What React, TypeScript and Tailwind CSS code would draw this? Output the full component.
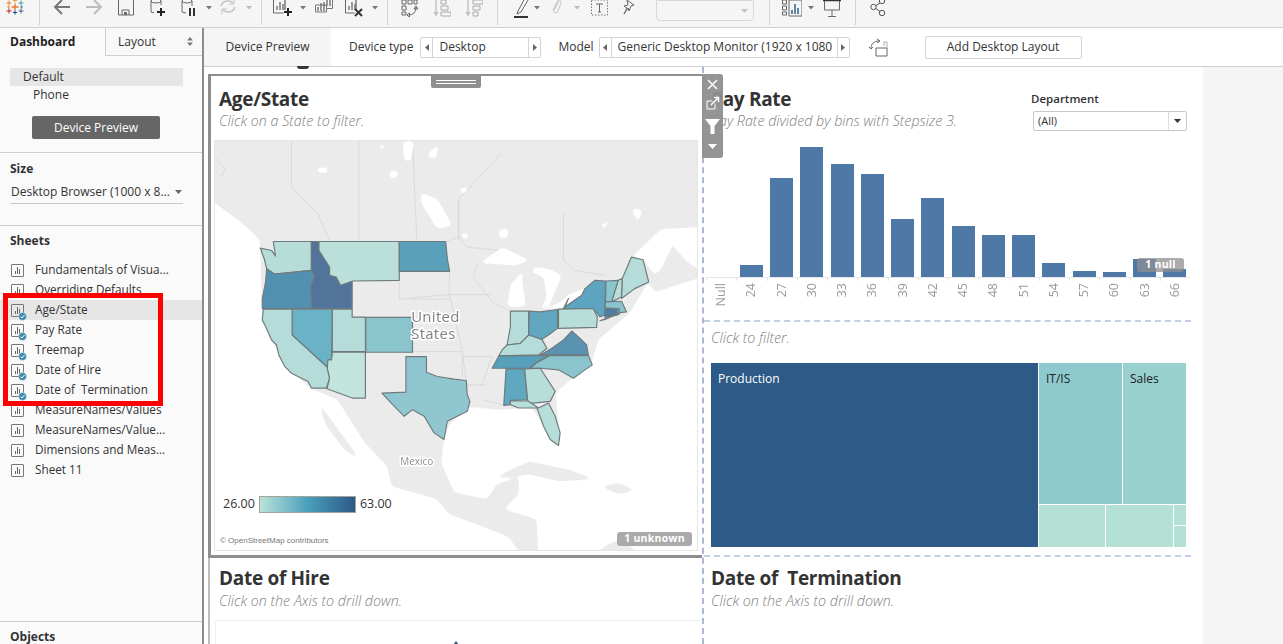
const sheets = [
  { name: "Fundamentals of Visua...", used: false },
  { name: "Overriding Defaults", used: false },
  { name: "Age/State", used: true, active: true },
  { name: "Pay Rate", used: true },
  { name: "Treemap", used: true },
  { name: "Date of Hire", used: true },
  { name: "Date of  Termination", used: true },
  { name: "MeasureNames/Values", used: false },
  { name: "MeasureNames/Value...", used: false },
  { name: "Dimensions and Meas...", used: false },
  { name: "Sheet 11", used: false },
];

const payBins = [
  { label: "Null", h: 0 },
  { label: "24", h: 12 },
  { label: "27", h: 99 },
  { label: "30", h: 130 },
  { label: "33", h: 113 },
  { label: "36", h: 103 },
  { label: "39", h: 58 },
  { label: "42", h: 79 },
  { label: "45", h: 51 },
  { label: "48", h: 42 },
  { label: "51", h: 42 },
  { label: "54", h: 14 },
  { label: "57", h: 6 },
  { label: "60", h: 5 },
  { label: "63", h: 18 },
  { label: "66", h: 8 },
];

// coordinates are 3x crops of the map, hence the two scaled groups below
const westStates = [
  ["#b7ddd9", "M205,318 L320,318 L320,405 L255,412 L208,416 L185,400 L178,370 L166,338 L200,345 L212,362 Z"],
  ["#5290b0", "M185,400 L208,416 L255,412 L320,405 L331,422 L318,455 L322,520 L172,520 L172,490 L182,440 Z"],
  ["#52749a", "M320,318 L343,318 L343,345 L375,395 L375,420 L395,425 L408,450 L443,437 L443,520 L322,520 L318,455 L331,422 L320,405 Z"],
  ["#bbe0da", "M343,318 L585,318 L585,435 L445,437 L408,450 L395,425 L375,420 L375,395 L343,345 Z"],
  ["#5ba0ba", "M585,318 L725,318 L730,370 L737,408 L585,408 Z"],
  ["#b5dcd8", "M383,522 L443,522 L443,546 L483,546 L483,650 L383,650 Z"],
  ["#8ac4cd", "M484,547 L625,547 L625,652 L484,652 Z"],
  ["#6ab2c6", "M262,522 L383,522 L381,675 L370,675 L368,697 L262,600 Z"],
  ["#b5dcd8", "M175,522 L262,522 L262,600 L368,697 L368,700 L375,730 L365,760 L320,760 L310,740 L260,715 L240,695 L222,660 L215,630 L200,615 L180,570 L172,555 Z"],
  ["#c3e4dd", "M383,652 L483,652 L483,790 L443,790 L367,762 L375,730 L368,700 L370,675 L381,675 Z"],
  ["#8fc6d0", "M605,665 L667,665 L667,712 L700,725 L750,733 L787,737 L790,780 L798,800 L790,830 L730,860 L720,915 L690,895 L660,845 L625,825 L600,845 L565,810 L533,775 L605,772 Z"],
];

const eastStates = [
  ["#b5dcd8", "M185,333 L240,333 L240,405 L215,430 L175,435 L185,380 Z"],
  ["#62a7c0", "M242,333 L275,335 L327,328 L327,385 L300,405 L280,418 L240,405 Z"],
  ["#b5dcd8", "M175,435 L215,430 L240,405 L280,418 L295,445 L270,465 L150,468 L160,450 Z"],
  ["#b7ded8", "M330,327 L435,325 L447,350 L445,382 L330,385 Z"],
  ["#5ca4bf", "M350,320 L400,285 L410,265 L440,240 L472,242 L470,345 L455,350 L435,325 L345,325 L360,295 Z"],
  ["#5a93b2", "M275,465 L310,445 L345,420 L370,393 L395,415 L415,435 L420,465 Z"],
  ["#56a0bc", "M150,468 L300,467 L260,490 L245,505 L130,505 Z"],
  ["#8ac4cd", "M305,467 L420,467 L432,495 L410,510 L375,535 L330,510 L275,505 L245,505 L262,490 Z"],
  ["#60a8bf", "M172,507 L228,507 L236,600 L185,602 L185,615 L165,617 Z"],
  ["#b7ded8", "M228,507 L275,505 L320,575 L305,605 L238,612 Z"],
  ["#b7ded8", "M185,603 L238,604 L270,625 L300,610 L320,650 L335,700 L330,738 L305,720 L285,680 L265,625 L210,625 L185,615 Z"],
  ["#b5dcd8", "M522,235 L550,170 L585,178 L602,245 L560,265 L520,295 Z"],
  ["#b7ded8", "M510,240 L522,235 L520,290 L490,305 Z"],
  ["#8ac4cd", "M473,242 L510,240 L490,305 L472,305 Z"],
  ["#8ac4cd", "M472,305 L520,303 L535,335 L510,338 L505,325 L470,323 Z"],
  ["#4f7c9f", "M470,325 L503,325 L505,345 L470,352 Z"],
  ["#5a93b2", "M505,325 L513,325 L513,342 L505,345 Z"],
  ["#5ca4bf", "M455,362 L500,345 L470,358 Z"],
];

const Ico = ({ w, className, children }: { w: number; className: string; children: React.ReactNode }) => (
  <svg width={w} height={24} viewBox={`0 0 ${w} 24`} fill="none" className={`shrink-0 ${className}`}>
    {children}
  </svg>
);

const Caret = ({ className, light }: { className: string; light?: boolean }) => (
  <Ico w={6} className={className}>
    <path d="M0 9h6l-3 3.500z" fill={light ? "#bbb" : "#777"} />
  </Ico>
);

const Sep = ({ className }: { className: string }) => <div className={`w-px h-[28px] shrink-0 bg-[#d4d4d4] ${className}`} />;

const Plus = ({ x, y, c = "#222" }: { x: number; y: number; c?: string }) => (
  <path d={`M${x - 4} ${y}h8M${x} ${y - 4}v8`} stroke={c} strokeWidth="2" />
);

const MiniBars = ({ x, y }: { x: number; y: number }) => (
  <path d={`M${x} ${y}v-4M${x + 3} ${y}v-8M${x + 6} ${y}v-6`} stroke="#666" strokeWidth="1.3" />
);

const LogoCross = ({ x, y, r, c, t = 1 }: { x: number; y: number; r: number; c: string; t?: number }) => (
  <path d={`M${x - r} ${y}h${r * 2}M${x} ${y - r}v${r * 2}`} stroke={c} strokeWidth={t} />
);

const Toolbar = () => (
  <div className="h-[28px] shrink-0 bg-[#f5f5f5] border-b border-[#cfcfcf] overflow-hidden">
    <div className="flex items-start -mt-[3px]">
      <Ico w={18} className="ml-[6px]">
        <LogoCross x={9} y={10} r={3.5} c="#e8762d" t={1.4} />
        <LogoCross x={9} y={3.5} r={2} c="#eb9e3e" />
        <LogoCross x={3} y={6} r={2.5} c="#e8862d" />
        <LogoCross x={15} y={6} r={2.5} c="#5b9aa8" />
        <LogoCross x={2.5} y={10} r={1.5} c="#eb9e3e" />
        <LogoCross x={15.5} y={10} r={1.5} c="#5b87a8" />
        <LogoCross x={3} y={14} r={2.5} c="#c72037" />
        <LogoCross x={9} y={15.5} r={2} c="#1f457e" />
        <LogoCross x={15} y={14} r={2.5} c="#3f6799" />
      </Ico>
      <Sep className="ml-[15px]" />
      <Ico w={18} className="ml-[13px]">
        <path d="M17 10H2M9 3l-7 7 7 7" stroke="#777" strokeWidth="2" />
      </Ico>
      <Ico w={18} className="ml-[14px]">
        <path d="M1 10h15M9 3l7 7-7 7" stroke="#bdbdbd" strokeWidth="2" />
      </Ico>
      <Ico w={16} className="ml-[15px]">
        <path d="M.5 1h15v17H.5zM4 18v-5h7v5" stroke="#666" />
        <path d="M6 15h3v3H6z" fill="#666" />
      </Ico>
      <Ico w={16} className="ml-[16px]">
        <ellipse cx="6" cy="4" rx="5" ry="2" stroke="#666" />
        <path d="M1 4v11l3 1M11 4v4" stroke="#666" />
        <Plus x={11} y={15} />
      </Ico>
      <Ico w={16} className="ml-[15px]">
        <ellipse cx="6" cy="4" rx="5" ry="2" stroke="#666" />
        <path d="M1 4v11l4 1M11 4v5" stroke="#666" />
        <path d="M9 11v8M13 11v8" stroke="#333" strokeWidth="2" />
      </Ico>
      <Caret className="ml-[9px]" />
      <Ico w={18} className="ml-[7px]">
        <path d="M2 9a7 6 0 0 1 12-3M16 10a7 6 0 0 1-12 3" stroke="#c4c4c4" strokeWidth="1.5" />
        <path d="M15 2v5h-5M3 17v-5h5" stroke="#c4c4c4" />
      </Ico>
      <Caret className="ml-[9px]" light />
      <Sep className="ml-[9px]" />
      <Ico w={20} className="ml-[11px]">
        <path d="M.5 3v13h10" stroke="#666" />
        <MiniBars x={4} y={13} />
        <path d="M12 13V3" stroke="#666" strokeWidth="1.3" />
        <Plus x={15} y={15} />
      </Ico>
      <Caret className="ml-[7px]" />
      <Ico w={18} className="ml-[9px]">
        <path d="M.5 8h11v7H.5z" stroke="#777" />
        <path d="M5.500 2.500h12v9h-6" stroke="#777" />
        <MiniBars x={9} y={9} />
        <MiniBars x={3} y={14} />
      </Ico>
      <Ico w={19} className="ml-[12px]">
        <path d="M.5 3v13h9" stroke="#666" />
        <MiniBars x={4} y={13} />
        <path d="M11 12V3" stroke="#666" strokeWidth="1.300" />
        <path d="M10 12l7 7M17 12l-7 7" stroke="#333" strokeWidth="2" />
      </Ico>
      <Caret className="ml-[8px]" />
      <Sep className="ml-[9px]" />
      <Ico w={17} className="ml-[13px]">
        <path d="M1 3h4v4H1zM7 3h4v4H7zM13 3h3v4h-3zM1 9h4v4H1zM1 15h4v3H1z" stroke="#666" />
        <path d="M15 10c0 5-3 8-7 8M6 18l2.500-2v4zM15 9l-2 3h4z" stroke="#666" />
      </Ico>
      <Ico w={18} className="ml-[15px]">
        <path d="M3 3v15M1 15l2 3 2-3" stroke="#bbb" strokeWidth="1.300" />
        <path d="M8 3h5v4H8zM8 9h7v4H8zM8 15h10v4H8z" stroke="#aaa" />
      </Ico>
      <Ico w={18} className="ml-[14px]">
        <path d="M3 3v15M1 15l2 3 2-3" stroke="#bbb" strokeWidth="1.300" />
        <path d="M8 3h10v4H8zM8 9h7v4H8zM8 15h5v4H8z" stroke="#aaa" />
      </Ico>
      <Sep className="ml-[14px]" />
      <Ico w={16} className="ml-[15px]">
        <path d="M5 14L12 1l3 2-7 12-4 2z" stroke="#666" />
        <path d="M1 20h14" stroke="#333" strokeWidth="2" />
      </Ico>
      <Caret className="ml-[5px]" />
      <Ico w={12} className="ml-[10px]">
        <path d="M9 4L4 13c-1.500 3 3 4 4 1l3-8c1-3-3-4-4-1L3 13" stroke="#c4c4c4" />
      </Ico>
      <Caret className="ml-[12px]" light />
      <Ico w={17} className="ml-[11px]">
        <path d="M.5 3h16v15H.5z" stroke="#777" strokeDasharray="1.500 1.500" />
        <path d="M5 7h7M8.500 7v8M7 15h3" stroke="#666" />
      </Ico>
      <Ico w={14} className="ml-[14px]">
        <path d="M5 3l7 5-3 1-2 5-1-3-4 6 3-6-3-2 4-1z" stroke="#666" />
      </Ico>
      <div className="ml-[20px] mt-[3px] w-[98px] h-[21px] shrink-0 border border-[#d8d8d8] rounded-b-sm flex items-center justify-end pr-[5px]">
        <svg width="7" height="4"><path d="M0 0h7L3.500 4z" fill="#c4c4c4" /></svg>
      </div>
      <Sep className="ml-[15px]" />
      <Ico w={20} className="ml-[12px]">
        <path d="M.5 3h4v4h-4zM.5 9h4v4h-4zM.5 15h4v3h-4zM7 3h13v16H7z" stroke="#666" />
        <path d="M10 17v-4M13 17V7M16 17v-6" stroke="#2e5f8a" strokeWidth="1.500" />
      </Ico>
      <Caret className="ml-[6px]" />
      <Ico w={18} className="ml-[9px]">
        <path d="M0 3h18" stroke="#333" strokeWidth="2.500" />
        <path d="M1.500 4v9h15V4M9 13v6M5 19.500h8" stroke="#666" />
      </Ico>
      <Sep className="ml-[14px]" />
      <Ico w={16} className="ml-[14px]">
        <circle cx="12" cy="4" r="2.700" stroke="#555" />
        <circle cx="3.500" cy="10" r="2.700" stroke="#555" />
        <circle cx="12" cy="16" r="2.700" stroke="#555" />
        <path d="M6 8.500L10 6M6 11.500l4 3" stroke="#555" />
      </Ico>
    </div>
  </div>
);

const SheetIcon = ({ used }: { used: boolean }) => (
  <span className="relative w-[13px] h-[13px] shrink-0 border border-[#777] rounded-[1px] flex items-end justify-center gap-px pb-[2px]">
    <span className="w-px h-[3px] bg-[#666]" />
    <span className="w-px h-[7px] bg-[#666]" />
    <span className="w-px h-[5px] bg-[#666]" />
    {used && (
      <svg width="9" height="9" viewBox="0 0 9 9" className="absolute -right-[4px] -bottom-[5px]">
        <circle cx="4.500" cy="4.500" r="4" fill="#3f87ab" stroke="#fff" strokeWidth=".5" />
        <path d="M2.500 4.500l1.500 1.500 2.500-3" stroke="#fff" fill="none" />
      </svg>
    )}
  </span>
);

const Sidebar = () => (
  <aside className="w-[204px] shrink-0 border-r-2 border-[#8c8c8c] bg-[#fafafa] flex flex-col text-[12px] text-[#333] *:shrink-0">
    <div className="flex h-[28px]">
      <div className="w-[105px] pl-[10px] flex items-center font-bold text-[#222]">Dashboard</div>
      <div className="flex-1 pl-[12px] pr-[9px] flex items-center justify-between border-l border-b border-[#cfcfcf] bg-[#f8f8f8]">
        Layout
        <svg width="6" height="9"><path d="M0 3.500L3 0l3 3.500zM0 5.500L3 9l3-3.500z" fill="#777" /></svg>
      </div>
    </div>
    <div className="ml-[10px] mt-[12px] w-[173px] h-[18px] pl-[13px] flex items-center bg-[#e6e6e6]">Default</div>
    <div className="h-[18px] pl-[33px] flex items-center">Phone</div>
    <div className="ml-[32px] mt-[12px] w-[128px] h-[23px] flex items-center justify-center rounded-[2px] bg-[#666] text-white">Device Preview</div>
    <div className="mt-[13px] border-t border-[#cfcfcf]" />
    <div className="mt-[7px] h-[18px] pl-[10px] flex items-center font-bold">Size</div>
    <div className="ml-[10px] mt-[5px] w-[173px] h-[21px] pb-[3px] flex items-center justify-between border-b border-[#c8c8c8] whitespace-nowrap">
      <span className="pl-px">Desktop Browser (1000 x 8...</span>
      <svg width="7" height="4" className="mr-[1px]"><path d="M0 0h7L3.500 4z" fill="#666" /></svg>
    </div>
    <div className="mt-[21px] border-t border-[#cfcfcf]" />
    <div className="mt-[6px] h-[18px] pl-[10px] flex items-center font-bold">Sheets</div>
    <div className="mt-[10px] flex flex-col text-[11.750px]">
      {sheets.map((sheet) => (
        <div key={sheet.name} className={`h-[20px] pl-[11px] flex items-center gap-[11px] whitespace-pre ${sheet.active ? "bg-[#e6e6e6]" : ""}`}>
          <SheetIcon used={sheet.used} />
          {sheet.name}
        </div>
      ))}
    </div>
    <div className="mt-[141px] border-t border-[#cfcfcf]" />
    <div className="mt-[7px] h-[16px] pl-[10px] flex items-center font-bold">Objects</div>
  </aside>
);

const Stepper = ({ label, className }: { label: string; className: string }) => (
  <div className={`h-[21px] shrink-0 flex items-stretch border border-[#d4d4d4] rounded-[2px] bg-white ${className}`}>
    <span className="w-[12px] flex items-center justify-center border-r border-[#d4d4d4]">
      <svg width="4" height="7"><path d="M4 0v7L0 3.500z" fill="#666" /></svg>
    </span>
    <span className="flex-1 pl-[6px] flex items-center whitespace-nowrap overflow-hidden">{label}</span>
    <span className="w-[12px] flex items-center justify-center border-l border-[#d4d4d4]">
      <svg width="4" height="7"><path d="M0 0v7l4-3.500z" fill="#666" /></svg>
    </span>
  </div>
);

const PreviewBar = () => (
  <div className="h-[39px] shrink-0 flex items-center border-b border-[#cfcfcf] bg-white text-[12px] text-[#333]">
    <div className="w-[127px] h-full flex items-center justify-center bg-[#f5f5f5]">Device Preview</div>
    <span className="ml-[18px]">Device type</span>
    <Stepper label="Desktop" className="ml-[7px] w-[121px]" />
    <span className="ml-[17px]">Model</span>
    <Stepper label="Generic Desktop Monitor (1920 x 1080" className="ml-[5px] w-[251px]" />
    <svg width="20" height="20" viewBox="0 0 20 20" fill="none" className="ml-[19px]">
      <path d="M7 11h11v8H7z" stroke="#666" />
      <path d="M15 9V5h3v6" stroke="#aaa" />
      <path d="M2 11c0-4 3-7 8-7M8 2l3 2-3 2M0 10l2 2 2-2" stroke="#666" />
    </svg>
    <div className="ml-[36px] w-[157px] h-[23px] flex items-center justify-center border border-[#d4d4d4] rounded-[2px]">Add Desktop Layout</div>
  </div>
);

const UsMap = () => (
  <svg viewBox="215 140 484 411" className="absolute inset-0 w-full h-full">
    <defs>
      {/* rounds off the hand-traced coast and lake corners */}
      <filter id="soft" x="-5%" y="-5%" width="110%" height="110%">
        <feGaussianBlur stdDeviation="2" />
        <feComponentTransfer>
          <feFuncA type="linear" slope="5" intercept="-2" />
        </feComponentTransfer>
      </filter>
    </defs>
    <g filter="url(#soft)">
      <path
        fill="#ebebeb"
        d="M205,130H710V228L670,240L690,262L710,275L657,292L650,282L632,312L600,340L593,363L575,378L557,393L562,445L555,440L543,423L533,408L500,410L470,407L450,425L445,440L442,463L455,493L488,500L498,485L520,478L520,495L505,510L538,520L540,560H525L510,538L490,530L450,515L438,500L392,487L388,467L365,443L338,400L310,388L280,360L262,310L260,240L245,225L205,195Z"
      />
      <path fill="#ebebeb" d="M317,400L362,462L345,450L327,427ZM492,480L530,462L570,470L597,480L560,482L530,475ZM602,487L620,484L638,491L620,495ZM590,560L610,545L625,540L645,560Z" />
    </g>
    <g transform="translate(205 135) scale(0.3333)" fill="none" stroke="#d6d6d6" strokeWidth="2.500">
      <path d="M260,15V155L340,235L375,315M463,15V315M625,15L638,315M890,55L765,190V305M30,65L60,100L45,125" />
      <path d="M585,408V492L737,478L740,492H620M740,492L775,650H625M775,650L790,760M737,408L735,478M725,318L765,305L790,335L890,345" />
    </g>
    <g transform="translate(450 200) scale(0.3333)" fill="none" stroke="#d6d6d6" strokeWidth="2.500">
      <path d="M28,0V120M345,40V180L380,210L470,225M75,225L85,190M75,235L135,310L180,330M0,283H125M100,550L130,470M40,470H130M40,470V530M40,555H110M100,600L165,617" />
    </g>
    <g filter="url(#soft)" fill="#fff">
      <g transform="translate(205 135) scale(0.3333)">
        <path d="M650,170L700,190L745,270L700,280L650,200ZM515,40L545,15L540,40ZM595,15L630,15L620,75L600,75ZM665,60L705,20L695,70ZM335,95L372,95L370,112L338,110ZM552,110L582,100L578,128L558,126ZM762,155L798,155L778,178Z" />
      </g>
      <g transform="translate(450 200) scale(0.3333)">
        <path d="M90,190L160,140L245,180L200,195L130,190ZM175,320L185,255L225,205L220,240L232,320ZM245,215L285,230L295,290L270,335L305,310L340,225L300,205L260,200ZM275,335L345,300L355,285L415,262L410,285L350,320ZM550,170L640,85L755,80V112L680,122L640,205L620,225L585,178ZM148,88L178,82L178,112L152,114ZM28,98L58,98L58,124ZM548,25L582,25L572,68ZM452,84L488,42L472,84Z" />
      </g>
    </g>
    <g transform="translate(205 135) scale(0.3333)" stroke="#6f7a7d" strokeWidth="3.500" strokeLinejoin="round">
      {westStates.map(([fill, d]) => (
        <path key={d} d={d} fill={fill} />
      ))}
    </g>
    <g transform="translate(450 200) scale(0.3333)" stroke="#6f7a7d" strokeWidth="3.500" strokeLinejoin="round">
      {eastStates.map(([fill, d]) => (
        <path key={d} d={d} fill={fill} />
      ))}
    </g>
    <g stroke="#fff" strokeWidth="3" paintOrder="stroke" style={{ fontFamily: "'Open Sans', sans-serif" }}>
      <text x="412" y="322" fontSize="15" fill="#808080" letterSpacing=".3">United</text>
      <text x="412" y="339" fontSize="15" fill="#808080" letterSpacing=".3">States</text>
      <text x="401" y="466" fontSize="10" fill="#8f8f8f">Mexico</text>
    </g>
  </svg>
);

const Heading = ({ title, note, low }: { title: string; note: string; low?: boolean }) => (
  <>
    <h2 className="h-[27px] text-[19px] leading-[28px] font-bold tracking-[-0.3px] text-[#333] whitespace-pre">{title}</h2>
    <p className={`h-[18px] text-[14.300px] leading-[18px] font-light italic text-[#808080] whitespace-nowrap ${low ? "mt-[1px]" : ""}`}>{note}</p>
  </>
);

const AgeStateCard = () => (
  <div className="relative w-[494px] h-[484px] shrink-0 border-l-[3px] border-t-2 border-b-[3px] border-[#8e8e8e] flex flex-col">
    <div className="absolute left-[220px] -top-[1px] w-[50px] h-[13px] rounded-b-[2px] bg-[#8f8f8f] flex flex-col items-center justify-center gap-[2px]">
      <span className="w-[40px] h-px bg-white" />
      <span className="w-[40px] h-px bg-white" />
    </div>
    <div className="pl-[8px] pt-[9px]">
      <Heading title="Age/State" note="Click on a State to filter." />
    </div>
    <div className="relative ml-[3px] mt-[10px] w-[484px] h-[411px] shrink-0 border border-[#e4e4e4] overflow-hidden text-[12px]">
      <UsMap />
      <div className="absolute left-[8px] bottom-[36px] flex items-center gap-[4px] text-[12.500px] text-[#333]">
        <span>26.00</span>
        <span className="w-[97px] h-[17px] border border-[#a3a39a] bg-gradient-to-r from-[#b9e2d8] via-[#4a9fbc] to-[#2d5a87]" />
        <span>63.00</span>
      </div>
      <span className="absolute left-[5px] bottom-[3px] text-[8px] text-[#777] font-['Liberation_Sans',sans-serif]">© OpenStreetMap contributors</span>
      <span className="absolute right-[5px] bottom-[4px] w-[75px] h-[14px] rounded-[3px] bg-[#aaaaaa] text-white text-[10.500px] font-bold tracking-wide flex items-center justify-center">1 unknown</span>
    </div>
  </div>
);

const ZoneTools = () => (
  <div className="absolute left-[702px] top-[74px] z-10 w-[21px] h-[84px] rounded-r-[3px] bg-[#8f8f8f]/95 flex flex-col items-center pt-[4px]">
    <svg width="13" height="13" viewBox="0 0 13 13"><path d="M2 2l9 9M11 2l-9 9" stroke="#fff" strokeWidth="1.500" /></svg>
    <svg width="15" height="15" viewBox="0 0 15 15" fill="none" className="mt-[5px]">
      <path d="M10 7.500V13H2V5h5.500" stroke="#fff" />
      <path d="M6 9l7-7M9 1.500h4.500V6" stroke="#fff" strokeWidth="1.500" />
    </svg>
    <svg width="15" height="16" viewBox="0 0 15 16" className="mt-[7px]"><path d="M0 1h15L9.500 8v8h-4V8z" fill="#fff" /></svg>
    <svg width="9" height="5" className="mt-[10px]"><path d="M0 0h9L4.500 5z" fill="#fff" /></svg>
  </div>
);

const PayRate = () => (
  <section className="relative h-[255px] shrink-0 border-b-2 border-dashed border-[#c3cfe2]">
    <div className="h-[75px] pl-[7px] pr-[4px] pt-[18px] flex justify-between">
      <div>
        <Heading title="Pay Rate" note="Pay Rate divided by bins with Stepsize 3." />
      </div>
      <div className="w-[154px] mt-[5px] text-[11.500px] text-[#333]">
        <div className="h-[18px] leading-[18px] font-semibold -ml-[2px]">Department</div>
        <div className="h-[20px] mt-[3px] flex items-center justify-between border border-[#c8c8c8] rounded-[2px] pl-[4px] text-[11px]">
          (All)
          <span className="w-[18px] h-full flex items-center justify-center border-l border-[#dcdcdc]">
            <svg width="7" height="4"><path d="M0 0h7L3.500 4z" fill="#333" /></svg>
          </span>
        </div>
      </div>
    </div>
    <div className="ml-[2px] w-[484px] grid grid-cols-[repeat(16,1fr)]">
      {payBins.map((bin) => (
        <div key={bin.label} className="flex flex-col items-center">
          <div className="h-[135px] flex items-end">
            <div className="w-[23px] bg-[#4e79a7]" style={{ height: bin.h }} />
          </div>
          <div className="self-stretch h-[4px] border-t border-l border-[#e6e6e6]" />
          <span className="mt-[2px] text-[12.500px] leading-[14px] text-[#9a9a9a] [writing-mode:vertical-rl] rotate-180">{bin.label}</span>
        </div>
      ))}
    </div>
    <span className="absolute left-[433px] top-[191px] w-[47px] h-[14px] rounded-[3px] bg-[#8f8f8f]/75 text-white text-[10.500px] font-bold tracking-wide flex items-center justify-center">1 null</span>
  </section>
);

const Treemap = () => (
  <section className="h-[235px] shrink-0 border-b-2 border-dashed border-[#c3cfe2] pl-[7px] pt-[7px]">
    <p className="h-[18px] text-[14.300px] leading-[18px] font-light italic text-[#808080]">Click to filter.</p>
    <div className="mt-[16px] w-[475px] h-[184px] flex gap-px text-[12px]">
      <div className="w-[327px] bg-[#2d5a87] text-white pl-[7px] pt-[7px]">Production</div>
      <div className="flex-1 flex flex-col gap-px">
        <div className="h-[141px] flex gap-px text-[#222]">
          <div className="w-[83px] bg-[#8ecacd] pl-[7px] pt-[7px]">IT/IS</div>
          <div className="flex-1 bg-[#98d0cd] pl-[7px] pt-[7px]">Sales</div>
        </div>
        <div className="flex-1 flex gap-px">
          <div className="w-[66px] bg-[#b4e0d6]" />
          <div className="w-[67px] bg-[#b4e0d6]" />
          <div className="flex-1 flex flex-col gap-px">
            <div className="h-[20px] bg-[#b4e0d6]" />
            <div className="flex-1 bg-[#b4e0d6]" />
          </div>
        </div>
      </div>
    </div>
  </section>
);

export default function App() {
  return (
    <div className="relative w-[1283px] h-[644px] overflow-hidden flex flex-col bg-white font-['Open_Sans',sans-serif]">
      <Toolbar />
      <div className="flex flex-1 min-h-0">
        <Sidebar />
        <div className="flex-1 flex flex-col min-w-0">
          <PreviewBar />
          <div className="relative flex flex-1 min-h-0">
            <span className="absolute left-[93px] -top-[1px] w-[12px] h-[3px] rounded-b-full bg-[#333]" />
            <div className="w-[498px] shrink-0 pl-[4px] pt-[7px] flex flex-col">
              <AgeStateCard />
              <div className="flex-1 border-l-2 border-[#bdbdbd] pl-[9px] pt-[6px] relative">
                <Heading title="Date of Hire" note="Click on the Axis to drill down." low />
                <div className="mt-[10px] -ml-[4px] h-[40px] border-l border-t border-[#f0f0f0]" />
                <span className="absolute left-[243px] top-[83px] w-0 h-0 border-x-[3px] border-x-transparent border-b-[4px] border-b-[#2d5a87]" />
              </div>
            </div>
            <div className="w-[489px] shrink-0 border-l-2 border-dashed border-[#a9b8d4] flex flex-col">
              <PayRate />
              <Treemap />
              <div className="pl-[7px] pt-[7px]">
                <Heading title="Date of  Termination" note="Click on the Axis to drill down." low />
              </div>
            </div>
            <div className="w-[12px] shrink-0" />
            <div className="flex-1 bg-[#f5f5f5]" />
          </div>
        </div>
      </div>
      <ZoneTools />
      {/* red marker from the original tutorial screenshot */}
      <div className="absolute left-[3px] top-[293px] w-[160px] h-[113px] border-[5px] border-[#ff0000]" />
    </div>
  );
}
